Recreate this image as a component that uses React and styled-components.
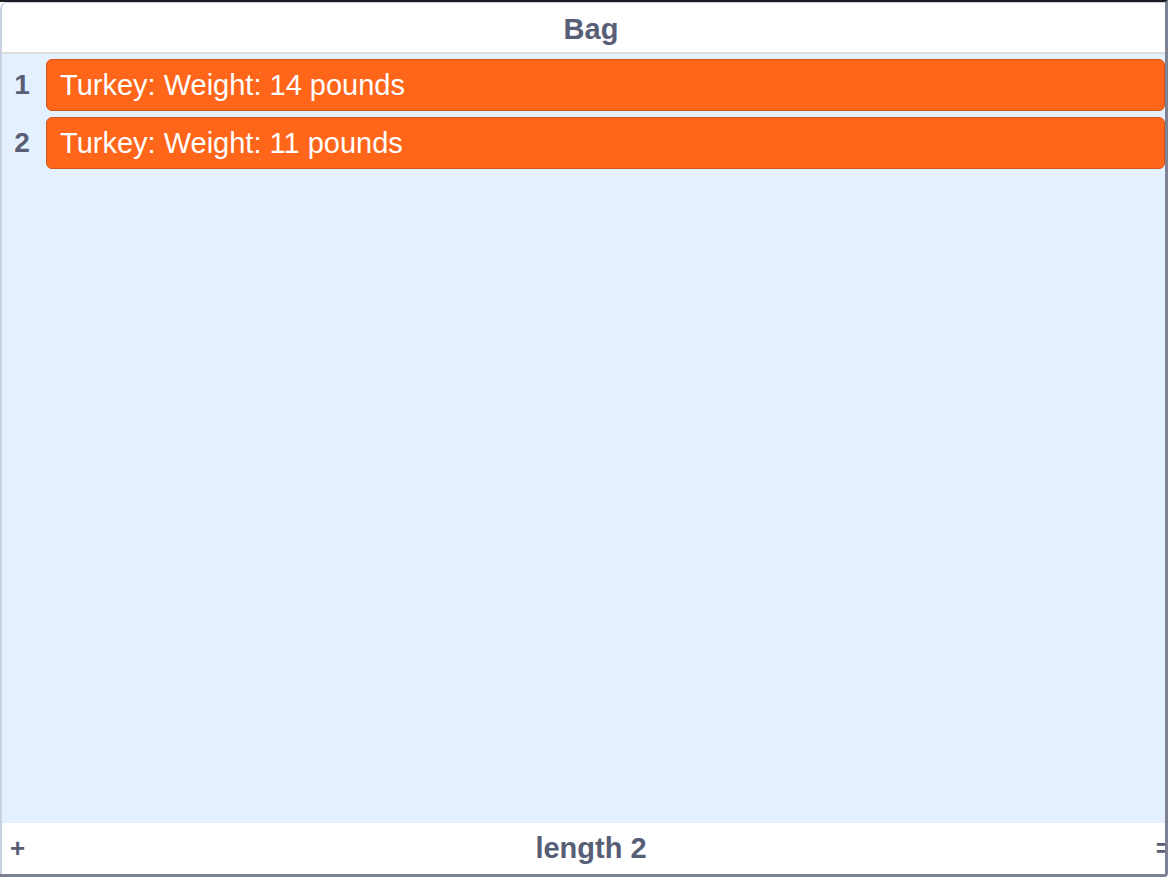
import React from "react";
import styled, { createGlobalStyle } from "styled-components";

const Global = createGlobalStyle`
  html, body {
    margin: 0;
    padding: 0;
    background: #ffffff;
  }
  body {
    font-family: "Liberation Sans", Arial, sans-serif;
  }
`;

const Stage = styled.div`
  width: 1168px;
  height: 877px;
  box-sizing: border-box;
  border-top: 2px solid #1c1c1f;
  border-right: 3px solid #7c8194;
  border-bottom: 3px solid #7c8194;
  border-bottom-right-radius: 4px;
  background: #ffffff;
  display: flex;
`;

const Monitor = styled.div`
  flex: 1;
  display: flex;
  flex-direction: column;
  border-left: 2px solid #c9d1e1;
  border-top: 1px solid #c9d1e1;
  border-top-left-radius: 7px;
  background: #e5f0ff;
  overflow: hidden;
`;

const Header = styled.div`
  height: 51px;
  box-sizing: border-box;
  background: #ffffff;
  border-bottom: 2px solid #dcdcdc;
  display: flex;
  align-items: center;
  justify-content: center;
  padding-left: 15px;
  padding-top: 3px;
  color: #575e75;
  font-weight: bold;
  font-size: 29px;
`;

const List = styled.div`
  flex: 1;
  display: flex;
  flex-direction: column;
  gap: 6px;
  padding-top: 5px;
`;

const Row = styled.div`
  display: flex;
  align-items: center;
  height: 52px;
`;

const Index = styled.div`
  width: 40px;
  text-align: center;
  color: #575e75;
  font-weight: bold;
  font-size: 28px;
`;

const Item = styled.div`
  flex: 1;
  height: 100%;
  box-sizing: border-box;
  margin-left: 4px;
  background: #ff661a;
  border: 1px solid #d2561c;
  border-radius: 6px;
  color: #ffffff;
  font-size: 29px;
  display: flex;
  align-items: center;
  padding-left: 13px;
`;

const Footer = styled.div`
  height: 51px;
  background: #ffffff;
  display: flex;
  align-items: center;
  color: #575e75;
  font-weight: bold;
  font-size: 29px;
  padding-left: 8px;
`;

const Plus = styled.span`
  width: 30px;
  font-size: 26px;
`;

const Length = styled.span`
  flex: 1;
  text-align: center;
  padding-left: 1px;
`;

const Handle = styled.span`
  width: 30px;
  text-align: right;
  font-size: 26px;
  margin-right: -6px;
`;

const items = ["Turkey: Weight: 14 pounds", "Turkey: Weight: 11 pounds"];

export default function App() {
  return (
    <>
      <Global />
      <Stage>
        <Monitor>
          <Header>Bag</Header>
          <List>
            {items.map((text, i) => (
              <Row key={i}>
                <Index>{i + 1}</Index>
                <Item>{text}</Item>
              </Row>
            ))}
          </List>
          <Footer>
            <Plus>+</Plus>
            <Length>length {items.length}</Length>
            <Handle>=</Handle>
          </Footer>
        </Monitor>
      </Stage>
    </>
  );
}
